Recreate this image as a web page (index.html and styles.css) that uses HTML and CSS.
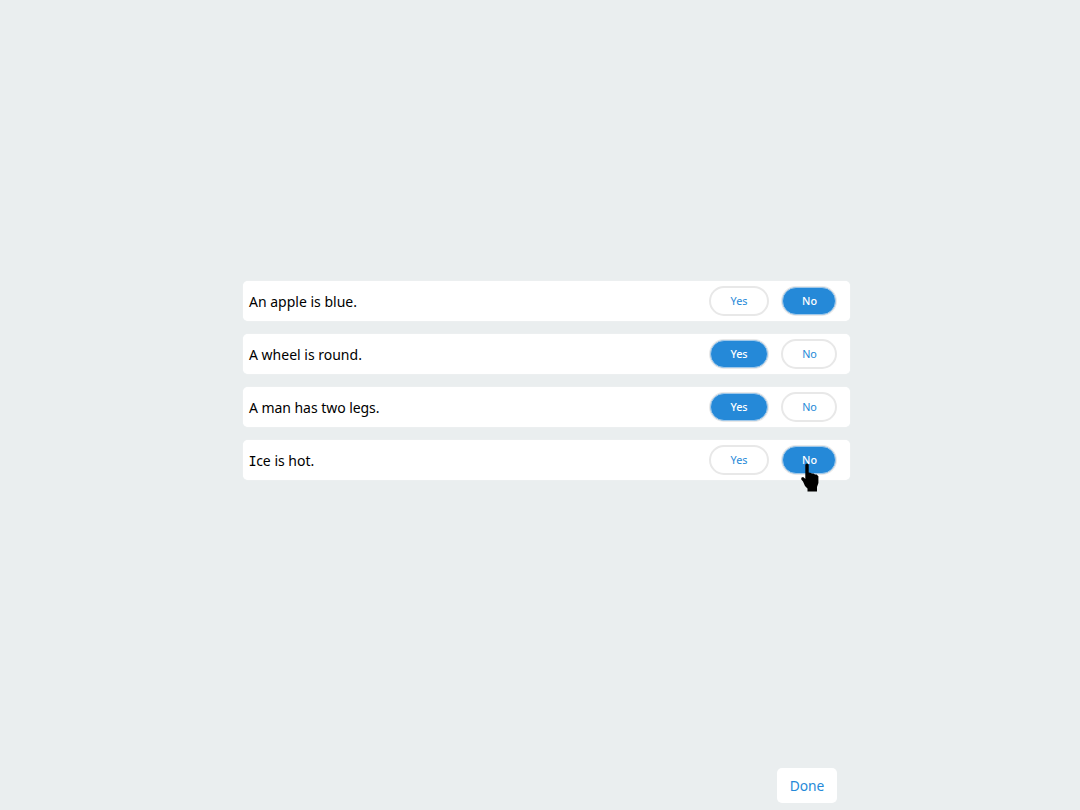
FILE: index.html
```html
<!DOCTYPE html>
<html lang="en">
<head>
<meta charset="utf-8">
<title>Yes or No</title>
<link rel="stylesheet" href="styles.css">
</head>
<body>
<main class="quiz">
  <section class="questions">
    <div class="row"><span class="statement">An apple is blue.</span><button class="choice yes">Yes</button><button class="choice no selected">No</button></div>
    <div class="row"><span class="statement">A wheel is round.</span><button class="choice yes selected">Yes</button><button class="choice no">No</button></div>
    <div class="row"><span class="statement man">A man has two legs.</span><button class="choice yes selected">Yes</button><button class="choice no">No</button></div>
    <div class="row"><span class="statement ice"><span class="barred">I</span>ce is hot.</span><button class="choice yes">Yes</button><button class="choice no selected">No</button></div>
  </section>
  <button class="done">Done</button>
</main>
<svg class="pointer" viewBox="0 0 18 29" width="18" height="29" aria-hidden="true"><path d="M4.3 2Q4.3 .4 6 .4T7.7 2V9.5L9.3 9.7L11 10.5L12.5 10.4L14 11.4L15.6 11.6L17.4 13.2V20L16 24V28.5H6.5V25.5L4 23L2 18.5L.3 16.5V14.8L2 14L3.4 15L4.3 16Z"/></svg>
</body>
</html>
```
FILE: styles.css
```css
* { box-sizing: border-box; }
body {
  margin: 0;
  background: #eaeeef;
  font-family: "Noto Sans", "Open Sans", sans-serif;
  color: #000;
}
.quiz {
  display: flex;
  flex-direction: column;
  justify-content: space-between;
  width: 607.5px;
  height: 810px;
  margin-left: 242.5px;
  padding: 281px 0 7.5px;
}
.questions {
  display: flex;
  flex-direction: column;
  gap: 13px;
}
.row {
  display: flex;
  align-items: center;
  height: 40px;
  padding: 0 13px 0 6.5px;
  border-radius: 5px;
  background: #fff;
  box-shadow: 0 0 1px #fff;
}
.statement {
  flex: 1;
  padding-top: 2px;
  font-size: 14px;
  line-height: 20px;
}
.man { letter-spacing: -0.05px; }
/* capital I with cross bars */
.barred {
  font-family: "DejaVu Sans Mono", monospace;
  font-size: 13.5px;
  line-height: 1;
  margin: 0 -0.5px 0 -0.5px;
}
button {
  margin: 0;
  padding: 0;
  border: 0;
  background: #fff;
  color: #2589d8;
  font-family: inherit;
}
.choice {
  height: 30px;
  padding-bottom: 1px;
  border: 2px solid #e8e8e8;
  border-radius: 16px;
  font-size: 10.8px;
  line-height: 26px;
}
.yes { width: 60px; }
.no { width: 56px; margin-left: 12px; padding-left: 1px; }
.selected {
  height: 28px;
  border: 1px solid #9fc8ea;
  background: #2589d8;
  box-shadow: 0 0 0 1px #e8e8e8;
  color: #fff;
  font-weight: 500;
}
.yes.selected { width: 58px; margin-right: 1px; }
.no.selected { width: 54px; margin-left: 13px; margin-right: 1px; padding-left: 1px; }
.done {
  align-self: flex-end;
  width: 60px;
  height: 35px;
  margin-right: 13.5px;
  padding-left: 1px;
  border-radius: 5px;
  font-size: 13.8px;
}
.pointer {
  position: absolute;
  left: 801px;
  top: 463px;
}
```
